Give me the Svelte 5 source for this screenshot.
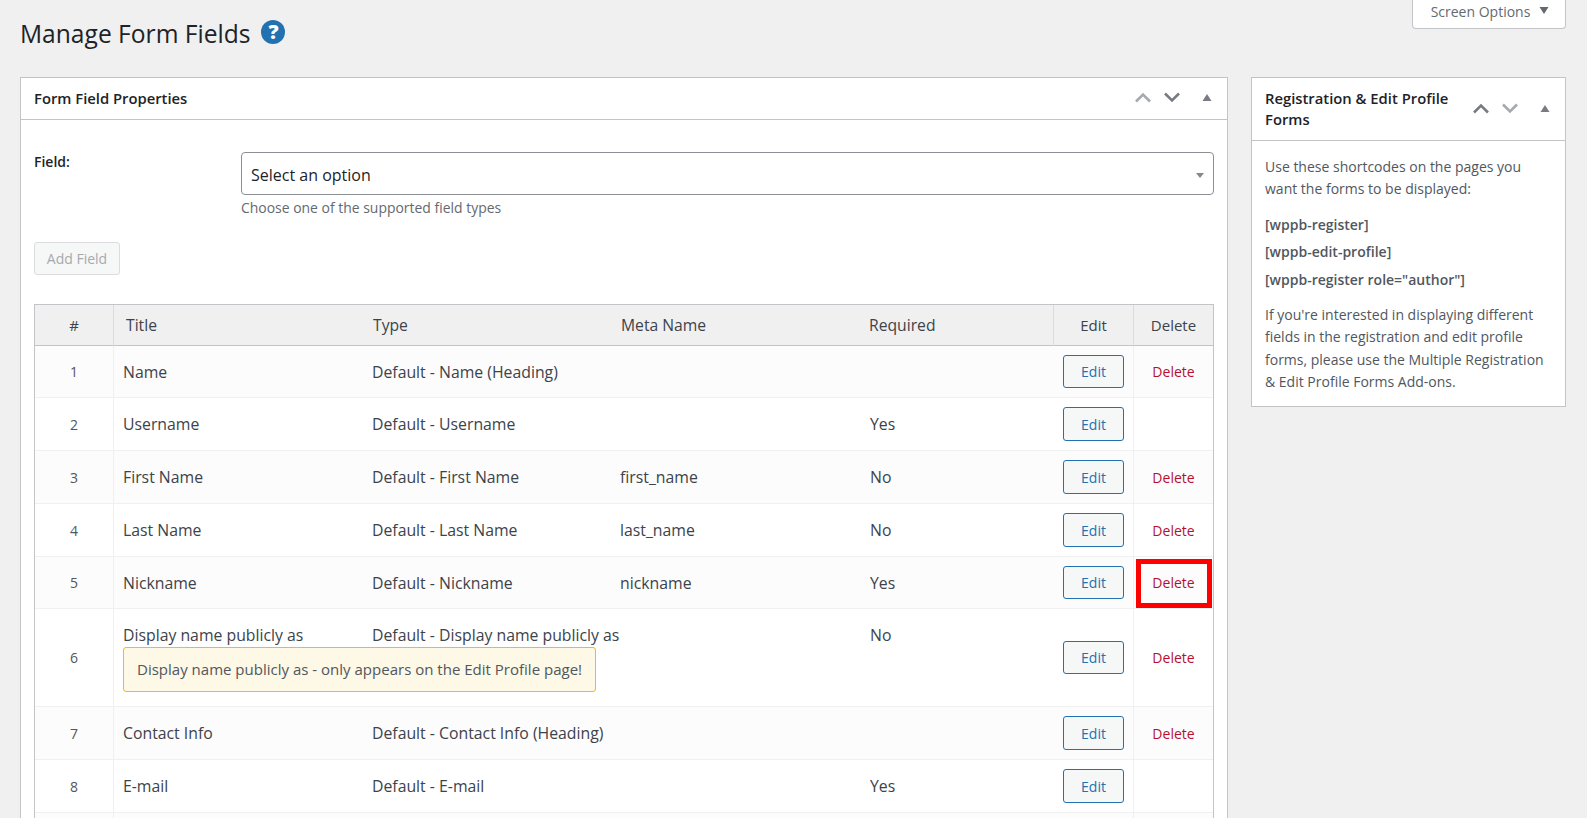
<script>
  const rows = [
    { n: 1, title: 'Name', type: 'Default - Name (Heading)', meta: '', req: '', del: true },
    { n: 2, title: 'Username', type: 'Default - Username', meta: '', req: 'Yes', del: false },
    { n: 3, title: 'First Name', type: 'Default - First Name', meta: 'first_name', req: 'No', del: true },
    { n: 4, title: 'Last Name', type: 'Default - Last Name', meta: 'last_name', req: 'No', del: true },
    { n: 5, title: 'Nickname', type: 'Default - Nickname', meta: 'nickname', req: 'Yes', del: true, mark: true },
    { n: 6, title: 'Display name publicly as', type: 'Default - Display name publicly as', meta: '', req: 'No', del: true, note: 'Display name publicly as - only appears on the Edit Profile page!' },
    { n: 7, title: 'Contact Info', type: 'Default - Contact Info (Heading)', meta: '', req: '', del: true },
    { n: 8, title: 'E-mail', type: 'Default - E-mail', meta: '', req: 'Yes', del: false }
  ];
</script>

{#snippet controls(upDim, downDim)}
  <div class="controls">
    <svg class="chev" class:dim={upDim} width="18" height="11" viewBox="0 0 18 11"><path d="M2 9.500 9 2.500l7 7" /></svg>
    <svg class="chev" class:dim={downDim} width="18" height="11" viewBox="0 0 18 11"><path d="M2 1.500l7 7 7-7" /></svg>
    <svg class="tri" width="10" height="7" viewBox="0 0 10 7"><path d="M5 0l4.500 7H.5z" /></svg>
  </div>
{/snippet}

<div class="page">
  <div class="topbar">
    <button class="screen-options">Screen Options <svg width="10" height="7" viewBox="0 0 10 7"><path d="M.5 0h9L5 7z" /></svg></button>
  </div>

  <div class="heading">
    <h1>Manage Form Fields</h1>
    <span class="help">?</span>
  </div>

  <div class="columns">
    <section class="panel main">
      <header class="panel-head">
        <h2>Form Field Properties</h2>
        {@render controls(true, false)}
      </header>
      <div class="panel-body">
        <div class="field-row">
          <span class="field-label">Field:</span>
          <div class="field-control">
            <div class="select">
              <span>Select an option</span>
              <i class="select-arrow"></i>
            </div>
            <p class="hint">Choose one of the supported field types</p>
          </div>
        </div>
        <button class="add" disabled>Add Field</button>

        <table>
          <colgroup>
            <col class="c-num" /><col class="c-title" /><col class="c-text" /><col class="c-text" /><col class="c-req" /><col class="c-edit" /><col class="c-del" />
          </colgroup>
          <thead>
            <tr>
              <th class="center">#</th>
              <th>Title</th>
              <th>Type</th>
              <th>Meta Name</th>
              <th>Required</th>
              <th class="center">Edit</th>
              <th class="center">Delete</th>
            </tr>
          </thead>
          <tbody>
            {#each rows as r}
              <tr class:odd={r.n % 2 === 1}>
                <td class="center num">{r.n}</td>
                <td class="text title">
                  {r.title}
                  {#if r.note}<div class="note">{r.note}</div>{/if}
                </td>
                <td class="text nowrap">{r.type}</td>
                <td class="text">{r.meta}</td>
                <td class="text req">{r.req}</td>
                <td class="center"><button class="edit">Edit</button></td>
                <td class="center del-cell">
                  {#if r.del}<span class="del">Delete</span>{/if}
                  {#if r.mark}<span class="mark"></span>{/if}
                </td>
              </tr>
            {/each}
            <tr class="odd">
              <td></td><td class="text"></td><td class="text"></td><td class="text"></td><td class="text"></td><td></td><td></td>
            </tr>
          </tbody>
        </table>
      </div>
    </section>

    <aside class="panel side">
      <header class="panel-head side-head">
        <h2>Registration &amp; Edit Profile Forms</h2>
        {@render controls(false, true)}
      </header>
      <div class="side-body">
        <p>Use these shortcodes on the pages you want the forms to be displayed:</p>
        <p class="code">[wppb-register]</p>
        <p class="code">[wppb-edit-profile]</p>
        <p class="code">[wppb-register role="author"]</p>
        <p>If you're interested in displaying different fields in the registration and edit profile forms, please use the Multiple Registration &amp; Edit Profile Forms Add-ons.</p>
      </div>
    </aside>
  </div>
</div>

<style>
  :global(html), :global(body) {
    margin: 0;
    background: #f0f0f1;
  }
  .page {
    height: 818px;
    overflow: hidden;
    box-sizing: border-box;
    padding: 0 21px 0 20px;
    font-family: "Open Sans", "Noto Sans", sans-serif;
    font-size: 14px;
    color: #3c434a;
    background: #f0f0f1;
  }
  .topbar {
    display: flex;
    justify-content: flex-end;
    height: 0;
  }
  .screen-options {
    flex: none;
    width: 154px;
    height: 29px;
    box-sizing: border-box;
    background: #fff;
    border: 1px solid #c3c4c7;
    border-top: 0;
    border-radius: 0 0 4px 4px;
    font: inherit;
    font-size: 14px;
    color: #646970;
    padding: 0 0 6px 2px;
    display: flex;
    align-items: center;
    justify-content: center;
    gap: 9px;
  }
  .screen-options svg { fill: #646970; margin-top: -2px; }
  .heading {
    display: flex;
    align-items: center;
    gap: 11px;
    height: 77px;
    padding-bottom: 13px;
    box-sizing: border-box;
  }
  h1 {
    margin: 0;
    padding-top: 3px;
    font-size: 24.600px;
    font-weight: 400;
    color: #1d2327;
    line-height: 30px;
  }
  .help {
    width: 24px;
    height: 24px;
    border-radius: 50%;
    background: #2271b1;
    color: #fff;
    font-weight: 800;
    font-size: 20px;
    line-height: 24px;
    text-align: center;
  }
  .columns {
    display: flex;
    align-items: flex-start;
    gap: 23px;
  }
  .panel {
    background: #fff;
    border: 1px solid #c3c4c7;
    box-sizing: border-box;
  }
  .main { flex: 1; min-width: 0; }
  .side { flex: none; width: 315px; }
  .panel-head {
    display: flex;
    align-items: center;
    justify-content: space-between;
    border-bottom: 1px solid #c3c4c7;
    height: 42px;
    box-sizing: border-box;
    padding: 0 15px 0 13px;
  }
  h2 {
    margin: 0;
    font-size: 14.800px;
    font-weight: 600;
    line-height: 21px;
    color: #1d2327;
  }
  .side-head { height: 63px; }
  .side-head h2 { width: 190px; }
  .controls {
    display: flex;
    align-items: center;
    flex: none;
    margin-top: -2px;
  }
  .chev {
    margin-right: 11px;
    fill: none;
    stroke: #787c82;
    stroke-width: 2.600;
  }
  .chev.dim { stroke: #a7aaad; }
  .tri {
    margin-left: 10px;
    fill: #787c82;
  }
  .panel-body { padding: 32px 13px 0; }
  .field-row { display: flex; }
  .field-label {
    width: 207px;
    flex: none;
    font-weight: 600;
    color: #1d2327;
    line-height: 20px;
  }
  .field-control { flex: 1; min-width: 0; }
  .select {
    height: 43px;
    box-sizing: border-box;
    border: 1px solid #8c8f94;
    border-radius: 4px;
    display: flex;
    align-items: center;
    justify-content: space-between;
    padding: 2px 9px 0 9px;
    font-size: 16px;
    color: #1d2327;
  }
  .select-arrow {
    width: 0;
    height: 0;
    border: 4px solid transparent;
    border-top: 5px solid #888;
    border-bottom: 0;
    margin-top: 2px;
  }
  .hint {
    margin: 2px 0 0;
    color: #646970;
    line-height: 21px;
    font-size: 13.950px;
  }
  .add {
    display: block;
    margin: 24px 0 29px;
    width: 86px;
    height: 33px;
    box-sizing: border-box;
    background: #f6f7f7;
    border: 1px solid #dcdcde;
    border-radius: 3px;
    color: #a7aaad;
    font: inherit;
    padding: 0;
  }
  table {
    width: 100%;
    table-layout: fixed;
    border-collapse: separate;
    border-spacing: 0;
    border: 1px solid #c3c4c7;
    border-bottom: 0;
    margin-bottom: 20px;
  }
  .c-num { width: 79px; }
  .c-title { width: 247px; }
  .c-text { width: 248px; }
  .c-edit { width: 80px; }
  .c-del { width: 79px; }
  th {
    background: #f0f0f1;
    font-weight: 400;
    font-size: 15.700px;
    text-align: left;
    height: 41px;
    box-sizing: border-box;
    padding: 0 0 1px 12px;
    border-bottom: 1px solid #c3c4c7;
    border-right: 1px solid #dcdcde;
    color: #3c434a;
    line-height: 20px;
  }
  th:nth-child(2), th:nth-child(3), th:nth-child(4) { border-right: 0; }
  th:last-child, td:last-child { border-right: 0; }
  th.center { font-size: 15px; }
  th.center, td.center { text-align: center; padding-left: 0; padding-right: 0; }
  td {
    height: 53px;
    box-sizing: border-box;
    border-bottom: 1px solid #f0f0f1;
    border-right: 1px solid #f0f0f1;
    line-height: 21px;
    padding: 0;
    background: #fff;
  }
  tbody tr:first-child td, tbody tr:nth-child(5) td { height: 52px; }
  tr.odd td { background: #fcfcfc; }
  td.text {
    vertical-align: top;
    padding: 16px 0 0 11px;
    border-right: 0;
    color: #3c434a;
    font-size: 15.800px;
  }
  td.title { padding-left: 9px; }
  td.req { padding-left: 13px; }
  td.nowrap { white-space: nowrap; }
  td.num { color: #50575e; }
  .note {
    position: relative;
    z-index: 1;
    margin: 1px 0 14px;
    width: 473px;
    box-sizing: border-box;
    height: 45px;
    background: #fef8e6;
    border: 1px solid #ffb900;
    border-radius: 3px;
    padding: 0 13px;
    display: flex;
    align-items: center;
    color: #50575e;
    white-space: nowrap;
    font-size: 15.020px;
  }
  .edit {
    width: 61px;
    height: 33.500px;
    box-sizing: border-box;
    background: #f6f7f7;
    border: 1px solid #2271b1;
    border-radius: 3px;
    color: #2271b1;
    font: inherit;
    padding: 0;
    display: inline-block;
    vertical-align: middle;
  }
  .del-cell { position: relative; }
  .del { color: #b80f30; }
  .mark {
    position: absolute;
    left: 2px;
    right: 1px;
    top: 2px;
    bottom: 0;
    border: 5px solid #f00;
  }
  .side-body { padding: 15px 13px 12px; color: #50575e; }
  .side-body p { margin: 0 0 13px; line-height: 22.400px; }
  .side-body p:last-child { margin-bottom: 0; }
  .side-body .code {
    font-weight: 600;
    margin-bottom: 5px;
  }
  .side-body .code + p:not(.code) { margin-top: 13px; }
</style>
